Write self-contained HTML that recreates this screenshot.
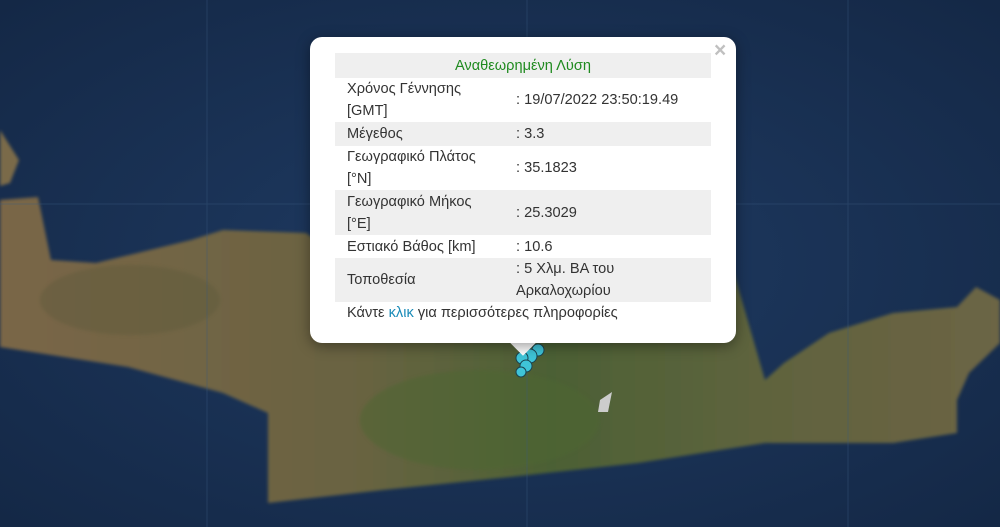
<!DOCTYPE html>
<html><head><meta charset="utf-8"><style>
body{margin:0;width:1000px;height:527px;overflow:hidden;background:#172f50;font-family:"Liberation Sans","DejaVu Sans",sans-serif;position:relative}
svg.map{position:absolute;left:0;top:0}
.pop{position:absolute;left:310px;top:37px;width:426px;height:306px;background:#fff;border-radius:12px;box-shadow:0 3px 14px rgba(0,0,0,.4)}
.tip{position:absolute;left:514px;top:334px;width:18px;height:18px;background:#fff;transform:rotate(45deg)}
.x{position:absolute;left:714px;top:39px;color:#c0c0c0;font-size:21px;font-weight:bold}
table{position:absolute;left:25px;top:16px;width:376px;border-collapse:collapse;font-size:14.6px;color:#333}
td{padding:0 0 0 12px;line-height:22px;vertical-align:middle}
tr.g{background:#efefef}
td.v{padding-left:0}
.h{color:#1f8a1f;text-align:center;height:25px;padding:0}
.f{position:absolute;left:37px;top:268px;font-size:14.6px;color:#333}
.f span{color:#1a8bb8}
</style></head><body>
<svg class="map" width="1000" height="527" viewBox="0 0 1000 527">
<defs>
<radialGradient id="sea" cx="50%" cy="50%" r="70%"><stop offset="0" stop-color="#1f3b63"/><stop offset="1" stop-color="#142846"/></radialGradient>
<linearGradient id="land" x1="0" y1="0" x2="1" y2="0"><stop offset="0" stop-color="#7a6647"/><stop offset=".35" stop-color="#6a6442"/><stop offset=".55" stop-color="#4c6135"/><stop offset=".8" stop-color="#62643f"/><stop offset="1" stop-color="#6c6545"/></linearGradient>
<filter id="b"><feGaussianBlur stdDeviation="1.5"/></filter>
</defs>
<rect width="1000" height="527" fill="url(#sea)"/>
<g filter="url(#b)">
<path d="M0,200 L38,197 L51,260 L96,263 L191,240 L223,230 L306,233 L400,300 L520,335 L733,270 L765,380 L784,363 L829,333 L893,313 L957,307 L976,287 L1000,300 L1000,343 L969,373 L957,400 L957,433 L893,443 L765,443 L638,463 L510,477 L383,490 L268,503 L268,413 L223,393 L128,367 L0,347 Z" fill="url(#land)"/>
<path d="M0,130 L19,160 L10,183 L0,186 Z" fill="#7a6a48"/>
</g>
<ellipse cx="480" cy="420" rx="120" ry="50" fill="#4d6633" opacity=".5" filter="url(#b)"/>
<ellipse cx="130" cy="300" rx="90" ry="35" fill="#5d5a3a" opacity=".4" filter="url(#b)"/>
<path d="M600,400 L612,392 L608,412 L598,412 Z" fill="#ccc"/>
<g stroke="#3a5a80" stroke-width="1" opacity=".4"><line x1="207" y1="0" x2="207" y2="527"/><line x1="527" y1="0" x2="527" y2="527"/><line x1="848" y1="0" x2="848" y2="527"/><line x1="0" y1="204" x2="1000" y2="204"/></g>
<g fill="#3fc4d8" stroke="#1b4450" stroke-width="1"><circle cx="538" cy="350" r="6"/><circle cx="530" cy="356" r="7"/><circle cx="522" cy="358" r="6"/><circle cx="526" cy="366" r="6"/><circle cx="521" cy="372" r="5"/></g>
</svg>
<div class="tip"></div>
<div class="pop">
<table>
<tr class="g"><td colspan="2" class="h">Αναθεωρημένη Λύση</td></tr>
<tr style="height:44px"><td style="width:169px">Χρόνος Γέννησης<br>[GMT]</td><td class="v">: 19/07/2022 23:50:19.49</td></tr>
<tr class="g" style="height:24px"><td>Μέγεθος</td><td class="v">: 3.3</td></tr>
<tr style="height:44px"><td>Γεωγραφικό Πλάτος<br>[°N]</td><td class="v">: 35.1823</td></tr>
<tr class="g" style="height:45px"><td>Γεωγραφικό Μήκος<br>[°E]</td><td class="v">: 25.3029</td></tr>
<tr style="height:23px"><td>Εστιακό Βάθος [km]</td><td class="v">: 10.6</td></tr>
<tr class="g" style="height:44px"><td>Τοποθεσία</td><td class="v">: 5 Χλμ. ΒΑ του<br>Αρκαλοχωρίου</td></tr>
</table>
<div class="f">Κάντε <span>κλικ</span> για περισσότερες πληροφορίες</div>
</div>
<div class="x">×</div>
</body></html>
